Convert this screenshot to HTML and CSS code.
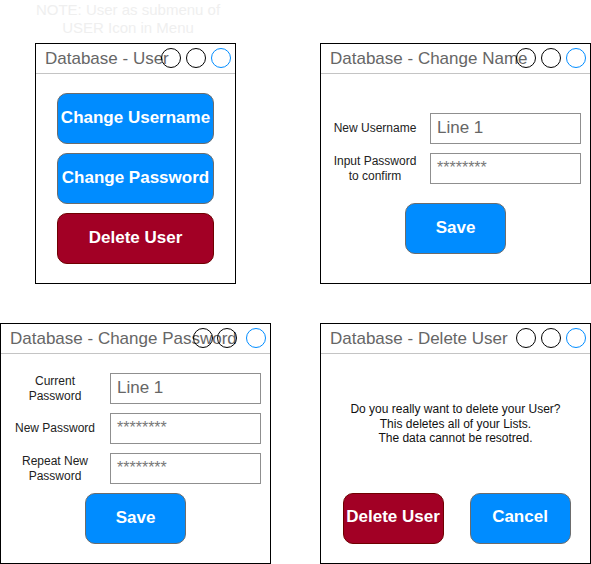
FILE: index.html
```html
<!DOCTYPE html>
<html>
<head>
<meta charset="utf-8">
<link rel="stylesheet" href="styles.css">
</head>
<body>
<div class="canvas">
  <div class="note">NOTE: User as submenu of<br>USER Icon in Menu</div>

  <div class="win win-user">
    <div class="win-head">
      <span class="title">Database - User</span>
      <div class="ctrls"><i class="c"></i><i class="c"></i><i class="c c-blue"></i></div>
    </div>
    <div class="body body-user">
      <div class="btn btn-blue btn-wide">Change Username</div>
      <div class="btn btn-blue btn-wide">Change Password</div>
      <div class="btn btn-red btn-wide">Delete User</div>
    </div>
  </div>

  <div class="win win-name">
    <div class="win-head">
      <span class="title">Database - Change Name</span>
      <div class="ctrls"><i class="c"></i><i class="c"></i><i class="c c-blue"></i></div>
    </div>
    <div class="body body-form body-name">
      <div class="row"><div class="label">New Username</div><div class="input">Line 1</div></div>
      <div class="row"><div class="label">Input Password<br>to confirm</div><div class="input pw">********</div></div>
      <div class="btn btn-blue btn-small save-name">Save</div>
    </div>
  </div>

  <div class="win win-pass">
    <div class="win-head">
      <span class="title">Database - Change Password</span>
      <div class="ctrls ctrls-pass"><i class="c"></i><i class="c"></i><i class="c c-blue"></i></div>
    </div>
    <div class="body body-form body-pass">
      <div class="row"><div class="label">Current<br>Password</div><div class="input">Line 1</div></div>
      <div class="row"><div class="label">New Password</div><div class="input pw">********</div></div>
      <div class="row"><div class="label">Repeat New<br>Password</div><div class="input pw">********</div></div>
      <div class="btn btn-blue btn-small save-pass">Save</div>
    </div>
  </div>

  <div class="win win-del">
    <div class="win-head">
      <span class="title">Database - Delete User</span>
      <div class="ctrls"><i class="c"></i><i class="c"></i><i class="c c-blue"></i></div>
    </div>
    <div class="body body-del">
      <p class="msg">Do you really want to delete your User?<br>This deletes all of your Lists.<br>The data cannot be resotred.</p>
      <div class="actions">
        <div class="btn btn-red btn-small">Delete User</div>
        <div class="btn btn-blue btn-small">Cancel</div>
      </div>
    </div>
  </div>
</div>
</body>
</html>
```

FILE: styles.css
```css
* { box-sizing: border-box; }
html, body { margin: 0; padding: 0; background: #fff; }
body { font-family: "Liberation Sans", Arial, sans-serif; }

.canvas { position: relative; width: 591px; height: 564px; overflow: hidden; }

.note {
  position: absolute;
  left: 28px; top: 1px; width: 200px;
  text-align: center;
  font-size: 15px;
  line-height: 18px;
  color: #efefef;
}

.win {
  position: absolute;
  border: 1px solid #000;
  background: #fff;
  display: flex;
  flex-direction: column;
}
.win-user { left: 35px; top: 43px; width: 201px; height: 241px; }
.win-name { left: 320px; top: 43px; width: 271px; height: 241px; }
.win-pass { left: 0; top: 323px; width: 271px; height: 241px; }
.win-del  { left: 320px; top: 323px; width: 271px; height: 241px; }

.win-head {
  position: relative;
  height: 30px;
  border-bottom: 1px solid #c4c4c4;
  display: flex;
  align-items: center;
  padding-left: 9px;
  padding-top: 1px;
  font-size: 17px;
  color: #666;
  white-space: nowrap;
}
.ctrls {
  position: absolute;
  right: 4px; top: 4px;
  display: flex;
  gap: 5px;
}
.ctrls-pass { gap: 4px; }
.ctrls-pass .c:nth-child(2) { margin-right: 5px; }
.c {
  display: block;
  width: 20px; height: 20px;
  border: 1px solid #000;
  border-radius: 50%;
}
.c-blue { border-color: #008cff; }

.body { flex: 1; display: flex; flex-direction: column; align-items: center; }
.body-user { padding-top: 19px; gap: 9px; }

.btn {
  display: flex;
  align-items: center;
  justify-content: center;
  height: 51px;
  padding-bottom: 2px;
  border-radius: 10px;
  border: 1px solid #666;
  color: #fff;
  font-weight: bold;
  font-size: 17px;
  white-space: nowrap;
}
.btn-blue { background: #008cff; border-color: #6c6c6c; }
.btn-red { background: #a20025; border-color: #6f0000; }
.btn-wide { width: 157px; }
.btn-small { width: 101px; }

.body-form { align-items: stretch; padding-left: 9px; gap: 9px; }
.body-name { padding-top: 39px; }
.body-pass { padding-top: 19px; }

.row { display: flex; align-items: center; gap: 10px; height: 31px; }
.label {
  width: 90px;
  text-align: center;
  font-size: 12px;
  line-height: 15px;
  color: #222;
}
.input {
  width: 151px;
  height: 31px;
  border: 1px solid #8f8f8f;
  padding-left: 6px;
  padding-bottom: 2px;
  display: flex;
  align-items: center;
  font-size: 17px;
  color: #666;
}
.input.pw {
  align-items: flex-start;
  padding-top: 6px;
  padding-bottom: 0;
  font-size: 16px;
  line-height: 16px;
  color: #777;
}
.save-name { align-self: center; margin-top: 10px; margin-left: -9px; }
.save-pass { align-self: center; margin-left: -9px; }

.body-del { padding-top: 48px; }
.msg {
  margin: 0;
  text-align: center;
  font-size: 12px;
  line-height: 14.5px;
  color: #111;
}
.actions { display: flex; gap: 26px; margin-top: 47px; margin-left: 2px; }
```
